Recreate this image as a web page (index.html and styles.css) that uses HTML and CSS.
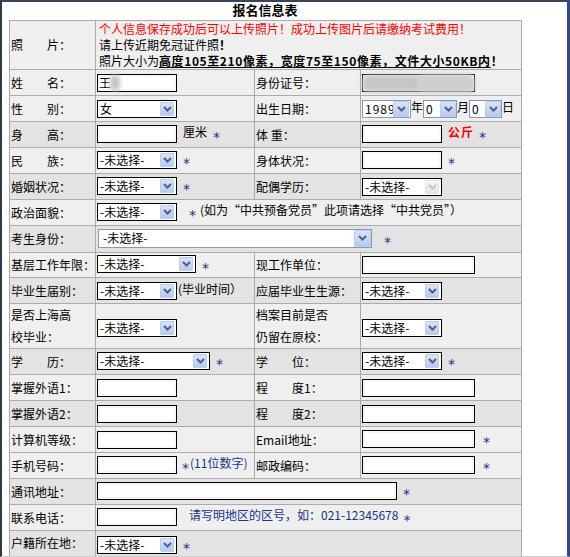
FILE: index.html
```html
<!DOCTYPE html>
<html lang="zh-CN">
<head>
<meta charset="utf-8">
<title>报名信息表</title>
<link rel="stylesheet" href="styles.css">
</head>
<body>
<div class="frame">
  <div class="page">
    <div class="title">报名信息表</div>
    <table class="form">
      <colgroup><col class="c1"><col class="c2"><col class="c3"><col class="c4"></colgroup>
      <tr class="photo light">
        <th>照　　片：</th>
        <td colspan="3" class="photo-text">
          <div class="red">个人信息保存成功后可以上传照片！成功上传图片后请缴纳考试费用！</div>
          <div>请上传近期免冠证件照<b>！</b></div>
          <div>照片大小为<b class="ul">高度105至210像素，宽度75至150像素，文件大小50KB内</b><b>！</b></div>
        </td>
      </tr>
      <tr class="light">
        <th>姓　　名：</th>
        <td><span class="field"><input class="inp w80" value="王"><span class="blur bname"></span></span></td>
        <th>身份证号：</th>
        <td><span class="field"><input class="inp w112"><span class="blur bid1"></span><span class="blur bid2"></span></span></td>
      </tr>
      <tr class="light">
        <th>性　　别：</th>
        <td><span class="sel w80"><span class="val">女</span><span class="btn"><svg width="9" height="6" viewBox="0 0 9 6"><polyline points="1,1 4.5,4.5 8,1"/></svg></span></span></td>
        <th>出生日期：</th>
        <td class="date"><span class="sel xp wy"><span class="val">1989</span><span class="btn"><svg width="9" height="6" viewBox="0 0 9 6"><polyline points="1,1 4.5,4.5 8,1"/></svg></span></span>年<span class="sel xp wm"><span class="val">0</span><span class="btn"><svg width="9" height="6" viewBox="0 0 9 6"><polyline points="1,1 4.5,4.5 8,1"/></svg></span></span>月<span class="sel xp wd"><span class="val">0</span><span class="btn"><svg width="9" height="6" viewBox="0 0 9 6"><polyline points="1,1 4.5,4.5 8,1"/></svg></span></span>日</td>
      </tr>
      <tr class="dark">
        <th>身　　高：</th>
        <td><input class="inp w80"><span class="unit">厘米</span><span class="req">*</span></td>
        <th>体 重：</th>
        <td><input class="inp w80"><span class="kg">公斤</span><span class="req">*</span></td>
      </tr>
      <tr class="light">
        <th>民　　族：</th>
        <td><span class="sel w80"><span class="val">-未选择-</span><span class="btn"><svg width="9" height="6" viewBox="0 0 9 6"><polyline points="1,1 4.5,4.5 8,1"/></svg></span></span><span class="req">*</span></td>
        <th>身体状况：</th>
        <td><input class="inp w80"><span class="req">*</span></td>
      </tr>
      <tr class="dark">
        <th>婚姻状况：</th>
        <td><span class="sel w80"><span class="val">-未选择-</span><span class="btn"><svg width="9" height="6" viewBox="0 0 9 6"><polyline points="1,1 4.5,4.5 8,1"/></svg></span></span><span class="req">*</span></td>
        <th>配偶学历：</th>
        <td><span class="sel w80 off"><span class="val">-未选择-</span><span class="btn"><svg width="9" height="6" viewBox="0 0 9 6"><polyline points="1,1 4.5,4.5 8,1"/></svg></span></span></td>
      </tr>
      <tr class="light">
        <th>政治面貌：</th>
        <td colspan="3"><span class="sel w80"><span class="val">-未选择-</span><span class="btn"><svg width="9" height="6" viewBox="0 0 9 6"><polyline points="1,1 4.5,4.5 8,1"/></svg></span></span><span class="req wide">*</span><span class="note">(如为“中共预备党员”此项请选择“中共党员”）</span></td>
      </tr>
      <tr class="dark tall1">
        <th>考生身份：</th>
        <td colspan="3"><span class="sel xp wbig"><span class="val">-未选择-</span><span class="btn big"><svg width="9" height="6" viewBox="0 0 9 6"><polyline points="1,1 4.5,4.5 8,1"/></svg></span></span><span class="req wide">*</span></td>
      </tr>
      <tr class="light short">
        <th>基层工作年限：</th>
        <td><span class="sel w99"><span class="val">-未选择-</span><span class="btn"><svg width="9" height="6" viewBox="0 0 9 6"><polyline points="1,1 4.5,4.5 8,1"/></svg></span></span><span class="req">*</span></td>
        <th>现工作单位：</th>
        <td><input class="inp w112"></td>
      </tr>
      <tr class="dark">
        <th>毕业生届别：</th>
        <td><span class="sel w80"><span class="val">-未选择-</span><span class="btn"><svg width="9" height="6" viewBox="0 0 9 6"><polyline points="1,1 4.5,4.5 8,1"/></svg></span></span><span class="after">(毕业时间）</span></td>
        <th>应届毕业生生源：</th>
        <td><span class="sel w80"><span class="val">-未选择-</span><span class="btn"><svg width="9" height="6" viewBox="0 0 9 6"><polyline points="1,1 4.5,4.5 8,1"/></svg></span></span></td>
      </tr>
      <tr class="light two">
        <th>是否上海高<br>校毕业：</th>
        <td><span class="sel w80"><span class="val">-未选择-</span><span class="btn"><svg width="9" height="6" viewBox="0 0 9 6"><polyline points="1,1 4.5,4.5 8,1"/></svg></span></span></td>
        <th>档案目前是否<br>仍留在原校：</th>
        <td><span class="sel w80"><span class="val">-未选择-</span><span class="btn"><svg width="9" height="6" viewBox="0 0 9 6"><polyline points="1,1 4.5,4.5 8,1"/></svg></span></span></td>
      </tr>
      <tr class="dark">
        <th>学　　历：</th>
        <td><span class="sel w112"><span class="val">-未选择-</span><span class="btn"><svg width="9" height="6" viewBox="0 0 9 6"><polyline points="1,1 4.5,4.5 8,1"/></svg></span></span><span class="req">*</span></td>
        <th>学　　位：</th>
        <td><span class="sel w80"><span class="val">-未选择-</span><span class="btn"><svg width="9" height="6" viewBox="0 0 9 6"><polyline points="1,1 4.5,4.5 8,1"/></svg></span></span><span class="req">*</span></td>
      </tr>
      <tr class="light">
        <th>掌握外语1：</th>
        <td><input class="inp w80"></td>
        <th>程　　度1：</th>
        <td><input class="inp w112"></td>
      </tr>
      <tr class="dark">
        <th>掌握外语2：</th>
        <td><input class="inp w80"></td>
        <th>程　　度2：</th>
        <td><input class="inp w112"></td>
      </tr>
      <tr class="light">
        <th>计算机等级：</th>
        <td><input class="inp w80"></td>
        <th>Email地址：</th>
        <td><input class="inp w112"><span class="req wide2">*</span></td>
      </tr>
      <tr class="light">
        <th>手机号码：</th>
        <td><input class="inp w80"><span class="star blue tel">*</span><span class="blue">(11位数字)</span></td>
        <th>邮政编码：</th>
        <td><input class="inp w112"><span class="req wide2">*</span></td>
      </tr>
      <tr class="dark">
        <th>通讯地址：</th>
        <td colspan="3"><input class="inp w299"><span class="req">*</span></td>
      </tr>
      <tr class="light">
        <th>联系电话：</th>
        <td colspan="3"><input class="inp w80"><span class="blue phone">请写明地区的区号，如：021-12345678</span><span class="star blue gap">*</span></td>
      </tr>
      <tr class="dark last">
        <th>户籍所在地：</th>
        <td colspan="3"><span class="sel w80"><span class="val">-未选择-</span><span class="btn"><svg width="9" height="6" viewBox="0 0 9 6"><polyline points="1,1 4.5,4.5 8,1"/></svg></span></span><span class="req">*</span></td>
      </tr>
    </table>
  </div>
</div>
</body>
</html>
```

FILE: styles.css
```css
html, body {
  margin: 0;
  padding: 0;
  background: #ffffff;
  overflow: hidden;
}

body {
  font-family: "Noto Sans CJK SC", "Noto Sans", "DejaVu Sans", sans-serif;
  font-size: 12px;
  color: #000;
}

.frame {
  box-sizing: border-box;
  width: 570px;
  height: 557px;
  overflow: hidden;
  background: #fff;
  border-top: 2px solid #34465c;
  border-left: 2px solid #2a3b48;
  border-right: 3px solid #2c4b8d;
  border-bottom: 1px solid #c9cccf;
}

.page {
  width: 512px;
  padding-left: 7px;
}

.title {
  height: 15px;
  line-height: 15px;
  margin-bottom: 3px;
  text-align: center;
  font-weight: bold;
  font-size: 13px;
}

.form {
  width: 512px;
  table-layout: fixed;
  border-collapse: collapse;
}

.c1 { width: 86px; }
.c2 { width: 159px; }
.c3 { width: 106px; }
.c4 { width: 161px; }

.form th,
.form td {
  border: 1px solid #ababab;
  padding: 0 1px;
  height: 25px;
  vertical-align: middle;
  text-align: left;
  font-weight: normal;
  white-space: nowrap;
  line-height: 16px;
}

.light th, .light td { background: #efefef; }
.dark th, .dark td { background: #e3e3e3; }

.photo th, .photo td { height: 48px; }
.tall1 th, .tall1 td { height: 26px; }
.short th, .short td { height: 24px; }
.two th, .two td { height: 44px; line-height: 22px; }
.last th, .last td { height: 30px; vertical-align: top; padding-top: 4px; }

.photo-text {
  line-height: 14px;
  padding-left: 3px !important;
}

.red { color: #ff0000; }

.ul {
  text-decoration: underline;
  letter-spacing: 0.6px;
}

.inp {
  box-sizing: border-box;
  height: 18px;
  margin: 0;
  padding: 0 1px;
  border: 1px solid #000;
  background: #fff;
  box-shadow: inset 0 0 0 2px #f6f6f6;
  font: 12px "Noto Sans CJK SC", "Noto Sans", sans-serif;
  color: #000;
  vertical-align: middle;
  outline: none;
}

.w80 { width: 80px; }
.w99 { width: 99px; }
.w112 { width: 113px; }
.w299 { width: 300px; }

.field {
  position: relative;
  display: inline-block;
  vertical-align: middle;
  line-height: 0;
}

.blur {
  position: absolute;
  background: #b9b9b9;
  filter: blur(2px);
  border-radius: 6px;
}

.bname { left: 13px; top: 1px; width: 10px; height: 16px; background: #c4c4c4; }
.bid1 { left: 0; top: 1px; width: 60px; height: 17px; background: #c6c6c6; }
.bid2 { left: 55px; top: 0; width: 58px; height: 19px; background: #cfcfcf; }

.sel {
  box-sizing: border-box;
  display: inline-flex;
  align-items: center;
  height: 18px;
  border: 1px solid #000;
  background: #fff;
  vertical-align: middle;
}

.sel .val {
  flex: 1;
  min-width: 0;
  overflow: hidden;
  white-space: nowrap;
  padding-left: 2px;
  line-height: 16px;
}

.sel .btn {
  box-sizing: border-box;
  display: flex;
  align-items: center;
  justify-content: center;
  width: 14px;
  height: 14px;
  margin-right: 2px;
  border: 1px solid #bccdf0;
  border-radius: 1px;
  background: linear-gradient(#d8e4fb, #b6c9f2);
}

.sel .btn svg polyline {
  fill: none;
  stroke: #4d6185;
  stroke-width: 2;
}

.sel.xp {
  border-color: #7f9db9;
}

.sel.xp .btn {
  width: 16px;
  height: 16px;
  margin-right: 0;
}

.sel.off .btn {
  background: linear-gradient(#f4f4f2, #e6e6e2);
  border-color: #e2e2de;
}

.sel.off .btn svg polyline {
  stroke: #c6c6c0;
}

.wy { width: 49px; }
.wm { width: 34px; }
.wd { width: 33px; }
.wy .val { flex: none; width: 28px; letter-spacing: 1px; }

.wbig {
  width: 274px;
  height: 19px;
  margin-left: 1px;
}

.wbig .val { padding-left: 4px; }
.wbig .btn.big { width: 17px; height: 17px; }

.date .sel { margin: 0; }

.unit { margin-left: 6px; }

.kg {
  margin-left: 6px;
  color: #ff0000;
  font-weight: bold;
  letter-spacing: 1px;
}

.req,
.star {
  display: inline-block;
  font-family: "DejaVu Sans", sans-serif;
  font-size: 14px;
  line-height: 16px;
  vertical-align: -5px;
}

.req {
  color: #0f2f8f;
  margin-left: 6px;
}

.unit + .req { margin-left: 6px; }
.kg + .req { margin-left: 5px; }
.req.wide { margin-left: 12px; }
.req.wide2 { margin-left: 8px; }

.note { margin-left: 4px; }

.after { margin-left: 1px; }

.blue { color: #15348e; }
.tel { margin-left: 5px; margin-right: 1px; }
.phone { margin-left: 12px; }
.gap { margin-left: 5px; }
```
